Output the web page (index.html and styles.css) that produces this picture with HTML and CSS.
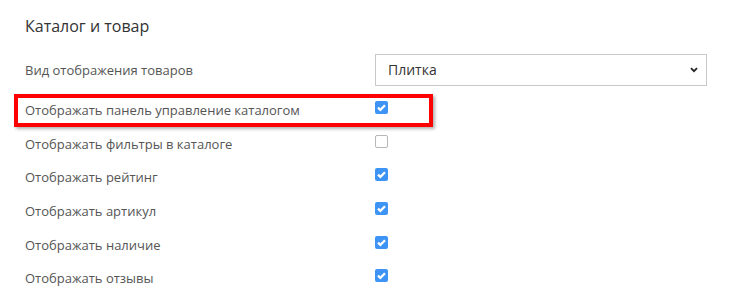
FILE: index.html
```html
<!DOCTYPE html>
<html lang="ru">
<head>
<meta charset="utf-8">
<title>Каталог и товар</title>
<link rel="stylesheet" href="styles.css">
</head>
<body>
<div class="panel">
  <h2 class="title">Каталог и товар</h2>
  <div class="row row-select">
    <div class="label">Вид отображения товаров</div>
    <div class="select">
      <span class="select-text">Плитка</span>
      <svg class="chevron" width="8" height="6" viewBox="0 0 8 6"><path d="M1 1.2 L4 4.2 L7 1.2" fill="none" stroke="#222" stroke-width="1.8"/></svg>
    </div>
  </div>
  <div class="row">
    <div class="label">Отображать панель управление каталогом</div>
    <span class="check on"><svg width="13" height="13" viewBox="0 0 13 13"><path d="M3 6.6 L5.4 8.9 L10 4.3" fill="none" stroke="#fff" stroke-width="2.3"/></svg></span>
  </div>
  <div class="row">
    <div class="label">Отображать фильтры в каталоге</div>
    <span class="check"></span>
  </div>
  <div class="row">
    <div class="label">Отображать рейтинг</div>
    <span class="check on"><svg width="13" height="13" viewBox="0 0 13 13"><path d="M3 6.6 L5.4 8.9 L10 4.3" fill="none" stroke="#fff" stroke-width="2.3"/></svg></span>
  </div>
  <div class="row">
    <div class="label">Отображать артикул</div>
    <span class="check on"><svg width="13" height="13" viewBox="0 0 13 13"><path d="M3 6.6 L5.4 8.9 L10 4.3" fill="none" stroke="#fff" stroke-width="2.3"/></svg></span>
  </div>
  <div class="row">
    <div class="label">Отображать наличие</div>
    <span class="check on"><svg width="13" height="13" viewBox="0 0 13 13"><path d="M3 6.6 L5.4 8.9 L10 4.3" fill="none" stroke="#fff" stroke-width="2.3"/></svg></span>
  </div>
  <div class="row">
    <div class="label">Отображать отзывы</div>
    <span class="check on"><svg width="13" height="13" viewBox="0 0 13 13"><path d="M3 6.6 L5.4 8.9 L10 4.3" fill="none" stroke="#fff" stroke-width="2.3"/></svg></span>
  </div>
  <div class="highlight"></div>
</div>
</body>
</html>
```

FILE: styles.css
```css
html, body {
  margin: 0;
  padding: 0;
  background: #fff;
}
body {
  font-family: "Open Sans", "Liberation Sans", sans-serif;
  color: #555;
}
.panel {
  position: relative;
  padding: 14px 33px 0 25px;
}
.title {
  margin: 0 0 16px 0;
  font-size: 16px;
  line-height: 24px;
  font-weight: 400;
  color: #333;
}
.row {
  display: flex;
  align-items: flex-start;
  height: 33.6px;
  box-sizing: border-box;
  padding-top: 7px;
}
.row-select {
  align-items: center;
  height: 32px;
  padding-top: 0;
  margin-bottom: 7.2px;
}
.label {
  width: 350px;
  flex: none;
  font-size: 13px;
  line-height: 20px;
}
.select {
  flex: none;
  width: 332px;
  height: 32px;
  box-sizing: border-box;
  border: 1px solid #c9c9c9;
  display: flex;
  align-items: center;
  justify-content: space-between;
  padding: 0 8px 0 12px;
  font-size: 14px;
  color: #333;
}
.select-text {
  line-height: 20px;
}
.chevron {
  display: block;
}
.check {
  flex: none;
  width: 13px;
  height: 13px;
  margin-top: 1px;
  box-sizing: border-box;
  border: 1px solid #b7b7b7;
  border-radius: 2px;
  background: #fff;
}
.check.on {
  border: none;
  background: #3e94f5;
}
.check svg {
  display: block;
}
.highlight {
  position: absolute;
  left: 14px;
  top: 94px;
  width: 419px;
  height: 33px;
  box-sizing: border-box;
  border: 4px solid #f00;
  box-shadow: 2px 2px 3px rgba(0, 0, 0, 0.3);
  pointer-events: none;
}
```
